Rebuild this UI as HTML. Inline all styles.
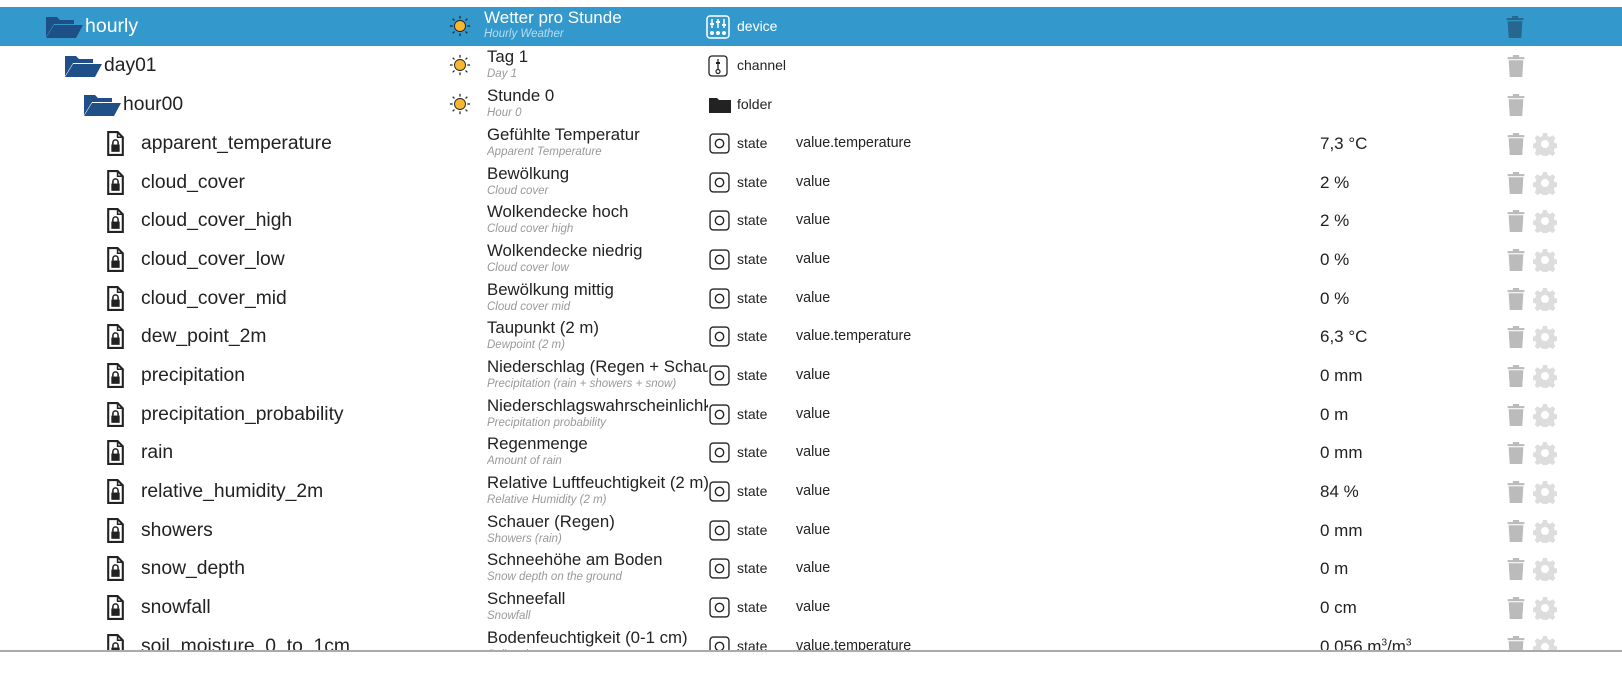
<!DOCTYPE html>
<html><head><meta charset="utf-8"><style>
body{margin:0;width:1622px;height:682px;background:#fff;overflow:hidden;font-family:"Segoe UI","Liberation Sans",sans-serif;color:#222;position:relative}
.wrap{position:absolute;left:0;top:0;width:1622px;height:651px;overflow:hidden}
.row{position:absolute;left:0;width:1622px;height:39px}
.sel{background:#3399cc;color:#fff}
.ic{position:absolute}
.nm{position:absolute;font-size:19.3px;top:9px;white-space:nowrap}
.t{position:absolute;left:487px;top:0;width:221px;overflow:hidden;white-space:nowrap}
.t1{font-size:16.8px;line-height:19px;margin-top:1px}
.t2{font-size:11.5px;font-style:italic;color:#999;line-height:13px;margin-top:2px}
.sel .t2{color:#b8dcef}
.ty{position:absolute;left:737px;top:11px;font-size:14px}
.ro{position:absolute;left:796px;top:11px;font-size:14.3px}
.va{position:absolute;left:1320px;top:10px;font-size:17px}
.line{position:absolute;left:0;top:650px;width:1622px;height:2px;background:#aaa}
</style></head><body>
<svg width="0" height="0" style="position:absolute"><defs>
<symbol id="fold" viewBox="0 0 40 24"><path d="M2 2h11l3 3h14v4H10L2 22z M10 10h29l-7 13H2z" fill="#1e4f86"/></symbol>
<symbol id="sun" viewBox="0 0 24 24"><circle cx="12" cy="12" r="6" fill="#f7b733" stroke="#222" stroke-width="1"/><g stroke="#222" stroke-width="1.3"><path d="M12 1v3M12 20v3M1 12h3M20 12h3M4 4l2 2M18 18l2 2M4 20l2-2M18 6l2-2"/></g></symbol>
<symbol id="file" viewBox="0 0 18 24"><path d="M2 1h9l5 5v17H2z" fill="none" stroke="#222" stroke-width="2"/><path d="M11 1v5h5" fill="none" stroke="#222" stroke-width="1.5"/><rect x="5" y="13" width="8" height="7" fill="#222"/><path d="M6.5 13v-2a2.5 2.5 0 0 1 5 0v2" fill="none" stroke="#222" stroke-width="1.5"/></symbol>
<symbol id="state" viewBox="0 0 20 20"><rect x="1" y="1" width="18" height="18" rx="3" fill="none" stroke="#222" stroke-width="1.3"/><circle cx="10" cy="10" r="4" fill="none" stroke="#222" stroke-width="1.3"/></symbol>
<symbol id="trash" viewBox="0 0 16 22"><rect x="0" y="2" width="16" height="2" fill="currentColor"/><rect x="5" y="0" width="6" height="3" fill="currentColor"/><path d="M1 5h14l-1 16H2z" fill="currentColor"/></symbol>
<symbol id="gear" viewBox="0 0 24 24"><path fill="#ddd" d="M10 1h4l.6 3 2.4 1 2.6-1.7 2.8 2.8L20.7 8.7l1 2.4 3 .6v4l-3 .6-1 2.4 1.7 2.6-2.8 2.8-2.6-1.7-2.4 1-.6 3h-4l-.6-3-2.4-1-2.6 1.7-2.8-2.8 1.7-2.6-1-2.4-3-.6v-4l3-.6 1-2.4L1.6 6.1 4.4 3.3 7 5l2.4-1zM12 8a4 4 0 1 0 0 8 4 4 0 1 0 0-8z"/></symbol>
</defs></svg>
<div class="wrap">
<div class="row sel" style="top:7px">
<svg class="ic" style="left:44px;top:8px" width="40" height="24"><use href="#fold"/></svg>
<div class="nm" style="left:85px;top:8px;font-size:19.5px">hourly</div>
<svg class="ic" style="left:449px;top:8px" width="22" height="22"><use href="#sun"/></svg>
<div class="t" style="left:484px"><div class="t1" style="font-size:17px">Wetter pro Stunde</div><div class="t2" style="margin-top:1px">Hourly Weather</div></div>
<svg class="ic" style="left:706px;top:8px" width="24" height="24" viewBox="0 0 24 24"><rect x="1" y="1" width="22" height="22" rx="3" fill="none" stroke="#fff" stroke-width="1.5"/><g stroke="#fff" stroke-width="1.5"><path d="M6 4v9M12 4v9M18 4v9"/></g><g fill="#fff"><rect x="4" y="8" width="4" height="2"/><rect x="10" y="6" width="4" height="2"/><rect x="16" y="9" width="4" height="2"/><circle cx="6" cy="18" r="2"/><circle cx="12" cy="18" r="2"/><circle cx="18" cy="18" r="2"/></g></svg>
<div class="ty" style="color:#fff">device</div>
<svg class="ic" style="left:1506px;top:9px;color:#26668f" width="18" height="23"><use href="#trash"/></svg>
</div>
<div class="row" style="top:46px">
<svg class="ic" style="left:63px;top:8px" width="40" height="24"><use href="#fold"/></svg>
<div class="nm" style="left:104px">day01</div>
<svg class="ic" style="left:449px;top:8px" width="22" height="22"><use href="#sun"/></svg>
<div class="t"><div class="t1">Tag 1</div><div class="t2">Day 1</div></div>
<svg class="ic" style="left:708px;top:9px" width="20" height="22" viewBox="0 0 20 22"><rect x="1" y="1" width="18" height="20" rx="3" fill="none" stroke="#222" stroke-width="1.3"/><path d="M10 4v10" stroke="#222" stroke-width="1.3"/><rect x="8" y="7" width="4" height="2" fill="#222"/><circle cx="10" cy="16.5" r="2" fill="none" stroke="#222" stroke-width="1.2"/></svg>
<div class="ty">channel</div>
<svg class="ic" style="left:1507px;top:9px;color:#bbb" width="18" height="23"><use href="#trash"/></svg>
</div>
<div class="row" style="top:85px">
<svg class="ic" style="left:82px;top:8px" width="40" height="24"><use href="#fold"/></svg>
<div class="nm" style="left:123px">hour00</div>
<svg class="ic" style="left:449px;top:8px" width="22" height="22"><use href="#sun"/></svg>
<div class="t"><div class="t1">Stunde 0</div><div class="t2">Hour 0</div></div>
<svg class="ic" style="left:709px;top:12px" width="22" height="16" viewBox="0 0 22 16"><path d="M0 1h8l2 2h12v13H0z" fill="#222"/></svg>
<div class="ty">folder</div>
<svg class="ic" style="left:1507px;top:9px;color:#bbb" width="18" height="23"><use href="#trash"/></svg>
</div>
<div id="states"></div>
</div>
<div class="line"></div>
<script>
var d=[["apparent_temperature","Gefühlte Temperatur","Apparent Temperature","value.temperature","7,3 °C"],
["cloud_cover","Bewölkung","Cloud cover","value","2 %"],
["cloud_cover_high","Wolkendecke hoch","Cloud cover high","value","2 %"],
["cloud_cover_low","Wolkendecke niedrig","Cloud cover low","value","0 %"],
["cloud_cover_mid","Bewölkung mittig","Cloud cover mid","value","0 %"],
["dew_point_2m","Taupunkt (2 m)","Dewpoint (2 m)","value.temperature","6,3 °C"],
["precipitation","Niederschlag (Regen + Schauer + Schnee)","Precipitation (rain + showers + snow)","value","0 mm"],
["precipitation_probability","Niederschlagswahrscheinlichkeit","Precipitation probability","value","0 m"],
["rain","Regenmenge","Amount of rain","value","0 mm"],
["relative_humidity_2m","Relative Luftfeuchtigkeit (2 m)","Relative Humidity (2 m)","value","84 %"],
["showers","Schauer (Regen)","Showers (rain)","value","0 mm"],
["snow_depth","Schneehöhe am Boden","Snow depth on the ground","value","0 m"],
["snowfall","Schneefall","Snowfall","value","0 cm"],
["soil_moisture_0_to_1cm","Bodenfeuchtigkeit (0-1 cm)","Soil moisture","value.temperature","0,056 m<sup style='font-size:10px'>3</sup>/m<sup style='font-size:10px'>3</sup>"]];
var h="";
d.forEach(function(r,i){var top=(124+i*38.65).toFixed(1);
h+='<div class="row" style="top:'+top+'px"><svg class="ic" style="left:106px;top:7px" width="19" height="25"><use href="#file"/></svg><div class="nm" style="left:141px">'+r[0]+'</div><div class="t"><div class="t1">'+r[1]+'</div><div class="t2">'+r[2]+'</div></div><svg class="ic" style="left:709px;top:9px" width="21" height="21"><use href="#state"/></svg><div class="ty">state</div><div class="ro">'+r[3]+'</div><div class="va">'+r[4]+'</div><svg class="ic" style="left:1507px;top:9px;color:#bbb" width="18" height="23"><use href="#trash"/></svg><svg class="ic" style="left:1533px;top:8px" width="24" height="24"><use href="#gear"/></svg></div>';});
document.getElementById("states").outerHTML=h;
</script>
</body></html>
